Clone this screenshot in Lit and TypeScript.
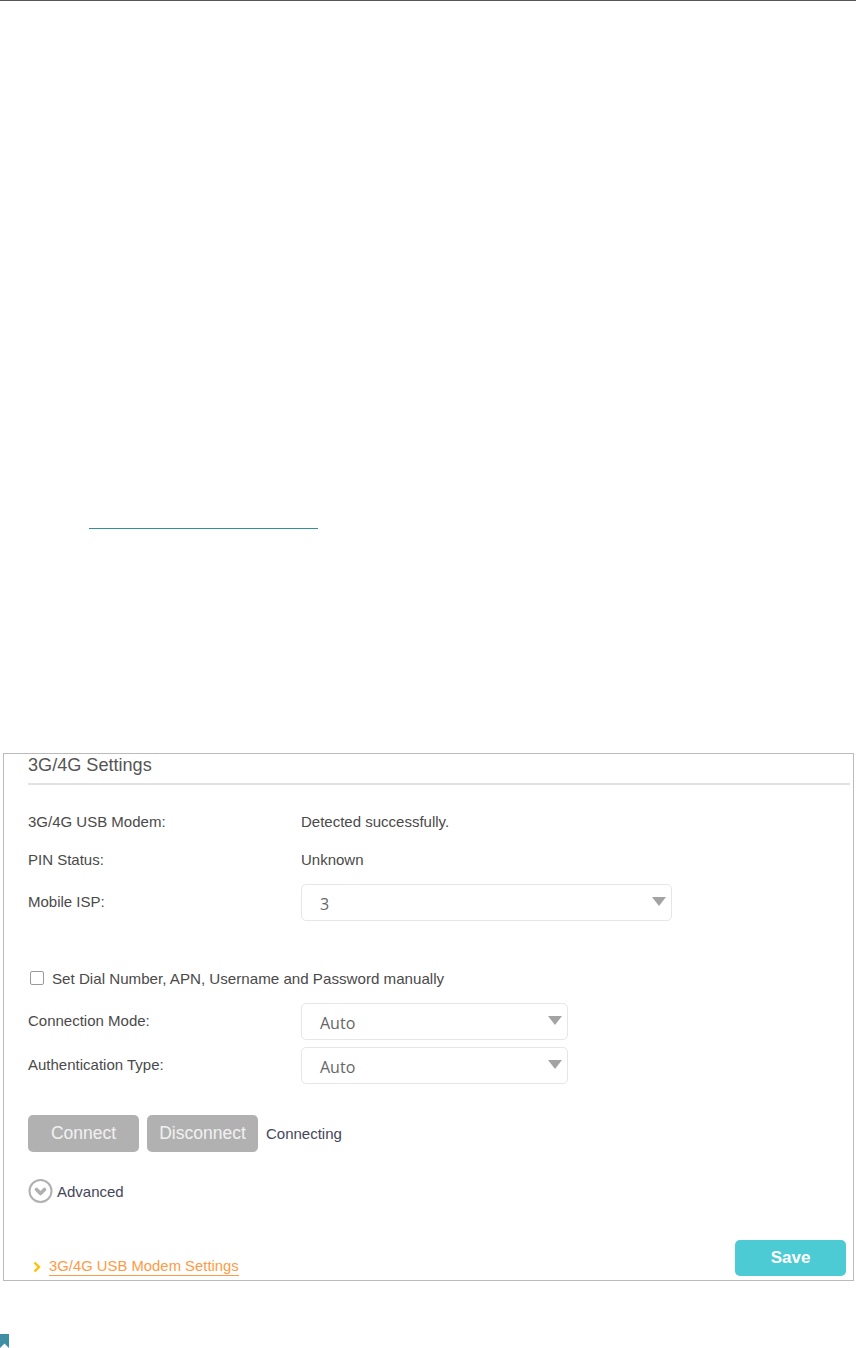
import { LitElement, html, css } from "lit";
import { customElement } from "lit/decorators.js";

@customElement("app-root")
export class AppRoot extends LitElement {
  static styles = css`
    :host {
      display: block;
      width: 856px;
      height: 1348px;
      background: #fff;
      font-family: "Liberation Sans", Arial, sans-serif;
      color: #4a4a4a;
      font-size: 15px;
      overflow: hidden;
    }
    .page { display: flex; flex-direction: column; height: 1348px; border-top: 1px solid #555; box-sizing: border-box; }
    .link-line { height: 1px; width: 229px; margin: 527px 0 0 89px; background: #2f8fa3; }
    .panel {
      margin: 224px 0 0 3px;
      width: 851px;
      height: 528px;
      box-sizing: border-box;
      border: 1px solid #bbb;
      padding: 0 3px 0 24px;
      display: flex;
      flex-direction: column;
    }
    .title { font-size: 18.1px; line-height: 22px; color: #555; height: 29px; }
    .rule { height: 2px; background: #e2e2e2; flex: none; }
    .row { display: grid; grid-template-columns: 273px auto; align-items: center; justify-content: start; }
    .r1 { margin-top: 26px; height: 20px; }
    .r2 { margin-top: 18px; height: 20px; }
    .r3 { margin-top: 15px; height: 37px; }
    .r3 .lbl { margin-top: -3px; }
    .r5 { margin-top: 17px; height: 37px; }
    .r6 { margin-top: 7px; height: 37px; }
    .r5 .lbl, .r6 .lbl { margin-top: -3px; }
    .select {
      box-sizing: border-box;
      height: 37px;
      border: 1px solid #e6e6e6;
      border-radius: 5px;
      padding: 2px 5px 0 18px;
      display: flex;
      align-items: center;
      justify-content: space-between;
      font-family: "Open Sans", "Liberation Sans", sans-serif;
      font-size: 16px;
      color: #666;
    }
    .wide { width: 371px; }
    .narrow { width: 267px; }
    .caret { width: 14px; height: 9px; margin-top: -5px; fill: #a3a3a3; flex: none; }
    .check { display: flex; align-items: center; margin: 49px 0 0 2px; height: 16px; gap: 8px; font-size: 15.15px; }
    .box { box-sizing: border-box; width: 14px; height: 14px; border: 1px solid #9a9a9a; border-radius: 2px; flex: none; }
    .buttons { display: flex; align-items: center; gap: 8px; margin-top: 31px; }
    .btn {
      box-sizing: border-box;
      width: 111px; height: 37px;
      border-radius: 5px;
      background: #b1b1b1;
      color: #f1f1f1;
      font-size: 17.5px;
      display: flex; align-items: center; justify-content: center;
    }
    .adv { display: flex; align-items: center; gap: 4px; margin-top: 26px; height: 26px; color: #44465a; }
    .adv svg { width: 25px; height: 26px; flex: none; }
    .status { color: #44465a; }
    .footer { display: flex; justify-content: space-between; align-items: flex-end; margin-top: auto; padding: 0 4px 4px 0; }
    .more { display: flex; align-items: center; gap: 8px; padding-left: 5px; color: #ff9a45; font-size: 14.85px; }
    .more svg { width: 8px; height: 12px; flex: none; }
    .more span { border-bottom: 1px solid #ff9a45; line-height: 17px; }
    .save {
      width: 111px; height: 36px; border-radius: 5px;
      background: #4ccbd5; color: #fff; font-size: 17px; font-weight: 700;
      display: flex; align-items: center; justify-content: center;
    }
    .mark { margin-top: auto; width: 9px; height: 14px; flex: none; }
  `;

  private caret() {
    return html`<svg class="caret" viewBox="0 0 14 9"><path d="M0 0H14L7 9Z" /></svg>`;
  }

  render() {
    return html`
      <div class="page">
        <div class="link-line"></div>
        <section class="panel">
          <div class="title">3G/4G Settings</div>
          <div class="rule"></div>
          <div class="row r1"><span class="lbl">3G/4G USB Modem:</span><span>Detected successfully.</span></div>
          <div class="row r2"><span class="lbl">PIN Status:</span><span>Unknown</span></div>
          <div class="row r3"><span class="lbl">Mobile ISP:</span><div class="select wide"><span>3</span>${this.caret()}</div></div>
          <div class="check"><span class="box"></span><span>Set Dial Number, APN, Username and Password manually</span></div>
          <div class="row r5"><span class="lbl">Connection Mode:</span><div class="select narrow"><span>Auto</span>${this.caret()}</div></div>
          <div class="row r6"><span class="lbl">Authentication Type:</span><div class="select narrow"><span>Auto</span>${this.caret()}</div></div>
          <div class="buttons">
            <div class="btn">Connect</div><div class="btn">Disconnect</div><span class="status">Connecting</span>
          </div>
          <div class="adv">
            <svg viewBox="0 0 25 26">
              <circle cx="12.5" cy="13" r="11" fill="none" stroke="#b0b0b0" stroke-width="2" />
              <path d="M8.5 11.5 L12.5 15.5 L16.5 11.5" fill="none" stroke="#b0b0b0" stroke-width="3.6" stroke-linejoin="round" stroke-linecap="round" />
            </svg>
            <span>Advanced</span>
          </div>
          <div class="footer">
            <div class="more">
              <svg viewBox="0 0 8 12"><path d="M1.5 1.5 L6 6 L1.5 10.5" fill="none" stroke="#ffc107" stroke-width="2.4" /></svg>
              <span>3G/4G USB Modem Settings</span>
            </div>
            <div class="save">Save</div>
          </div>
        </section>
        <svg class="mark" viewBox="0 0 9 14"><path d="M0 0H9V14L4.5 9.5L0 14Z" fill="#3f8ea3" /></svg>
      </div>
    `;
  }
}
